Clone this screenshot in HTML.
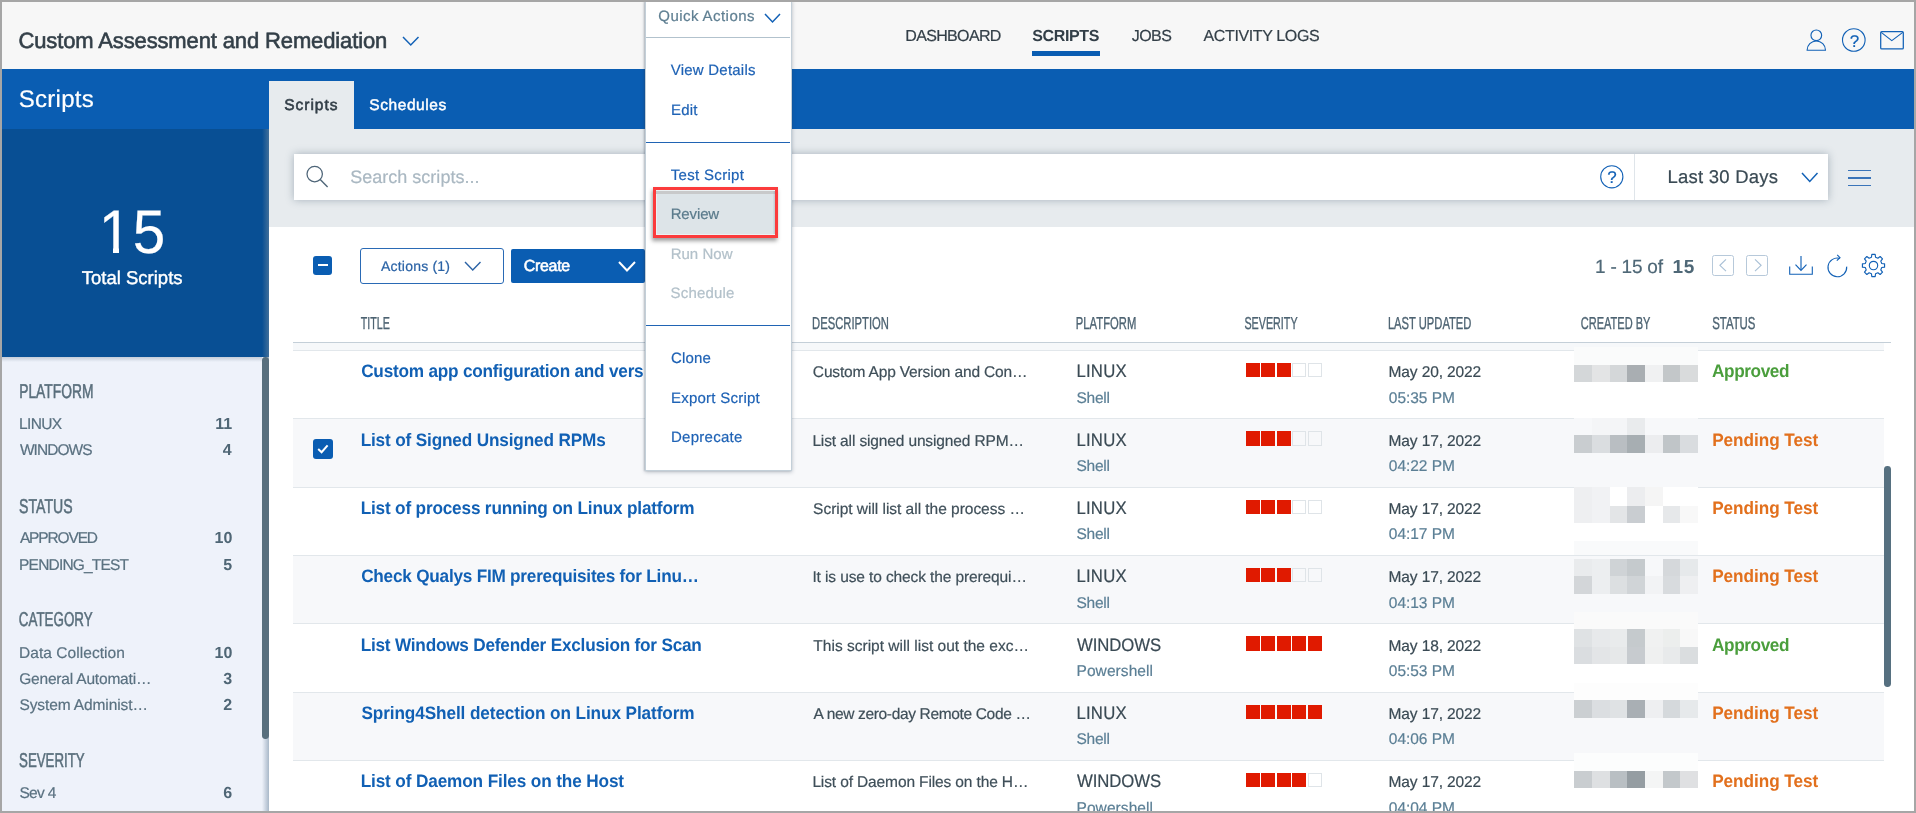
<!DOCTYPE html>
<html lang="en">
<head>
<meta charset="utf-8">
<title>Custom Assessment and Remediation - Scripts</title>
<style>
html,body{margin:0;padding:0;}
body{width:1916px;height:813px;overflow:hidden;background:#fff;font-family:"Liberation Sans",sans-serif;}
#root{position:absolute;left:0;top:0;width:1916px;height:813px;overflow:hidden;background:transparent;will-change:transform;}
#root div,#root .t,#root svg,#root .g{position:absolute;}
#root div{box-sizing:border-box;}
.g{left:0;top:0;width:0;height:0;margin:0;padding:0;border:0;list-style:none;display:block;}
.t{white-space:nowrap;display:block;margin:0;padding:0;font-weight:400;font-style:normal;text-decoration:none;text-rendering:geometricPrecision;}
svg{overflow:visible;}
</style>
</head>
<body>
<div id="root">
<!-- application header -->
<header class="g app-header">
<div style="left:0px;top:0px;width:1916px;height:69px;background:#f7f7f7;"></div>
<h1 class="t" id="t0" style="top:28px;font-size:22px;line-height:25px;color:#333f48;-webkit-text-stroke:0.6px #333f48;left:18.47px;letter-spacing:-0.131px;">Custom Assessment and Remediation</h1>
<svg style="left:402.5px;top:36.5px;" width="15.5" height="8" viewBox="0 0 15.5 8" fill="none"><polyline points="0,0 7.75,8 15.5,0" stroke="#1261b6" stroke-width="1.5" stroke-linecap="butt" stroke-linejoin="miter"/></svg>
<nav class="g app-nav">
<a class="t" id="t1" style="top:28px;font-size:16px;line-height:17px;color:#333f48;-webkit-text-stroke:0.2px #333f48;left:905.25px;letter-spacing:-0.657px;">DASHBOARD</a>
<a class="t" id="t2" aria-current="page" style="top:28px;font-size:16px;line-height:17px;color:#333f48;font-weight:700;left:1032.25px;letter-spacing:-0.362px;">SCRIPTS</a>
<div style="left:1032px;top:51px;width:68px;height:5px;background:#0a5db2;"></div>
<a class="t" id="t3" style="top:28px;font-size:16px;line-height:17px;color:#333f48;-webkit-text-stroke:0.2px #333f48;left:1131.75px;letter-spacing:-0.558px;">JOBS</a>
<a class="t" id="t4" style="top:28px;font-size:16px;line-height:17px;color:#333f48;-webkit-text-stroke:0.2px #333f48;left:1203.50px;letter-spacing:-0.371px;">ACTIVITY LOGS</a>
</nav>
<svg style="left:1806px;top:29px;" width="21" height="23" viewBox="0 0 21 23" fill="none"><circle cx="10.3" cy="6.3" r="5.35" stroke="#1261b6" stroke-width="1.15"/><path d="M1.1 21.2 A9.2 9.2 0 0 1 19.5 21.2 Z" stroke="#1261b6" stroke-width="1.15" stroke-linejoin="round"/></svg>
<svg style="left:1842px;top:28.3px;" width="24" height="24" viewBox="0 0 24 24" fill="none"><circle cx="11.8" cy="12" r="11.3" stroke="#1261b6" stroke-width="1.1"/></svg>
<span class="t" id="t5" style="top:32px;font-size:17px;line-height:19px;color:#1261b6;-webkit-text-stroke:0.2px #1261b6;left:1849.70px;">?</span>
<svg style="left:1880px;top:31px;" width="24" height="19" viewBox="0 0 24 19" fill="none"><rect x="0.7" y="0.7" width="22.6" height="17.2" rx="1" stroke="#1261b6" stroke-width="1.25"/><polyline points="1.2,1.4 11.8,9.6 22.8,1.4" stroke="#1261b6" stroke-width="1.15" stroke-linejoin="round"/></svg>
</header>
<!-- module bar -->
<section class="g module-bar">
<div style="left:0px;top:69px;width:1916px;height:60px;background:#0a5db2;"></div>
<h2 class="t" id="t6" style="top:86px;font-size:24px;line-height:27px;color:#fff;-webkit-text-stroke:0.2px #fff;left:18.75px;letter-spacing:0.273px;">Scripts</h2>
<div style="left:269px;top:81px;width:85px;height:48px;background:#e7ebee;"></div>
<span class="t" id="t7" style="top:97px;font-size:15.5px;line-height:17px;color:#333f48;-webkit-text-stroke:0.6px #333f48;left:284.32px;letter-spacing:0.966px;">Scripts</span>
<span class="t" id="t8" style="top:97px;font-size:15.5px;line-height:17px;color:#fff;-webkit-text-stroke:0.45px #fff;left:369.32px;letter-spacing:0.572px;">Schedules</span>
</section>
<!-- sidebar -->
<aside class="g sidebar">
<div style="left:0px;top:129px;width:269px;height:228px;background:#084f94;"></div>
<span class="t" id="t9" style="top:198px;font-size:61.5px;line-height:69px;color:#fff;-webkit-text-stroke:0.2px #fff;left:98px;letter-spacing:1.599px;transform:translateX(0.75px) scale(0.9500,1.0000);transform-origin:left 56px;">15</span>
<div style="left:101px;top:247px;width:12px;height:7px;background:#084f94;"></div>
<div style="left:119px;top:247px;width:12px;height:7px;background:#084f94;"></div>
<span class="t" id="t10" style="top:267px;font-size:18.5px;line-height:21px;color:#fff;-webkit-text-stroke:0.4px #fff;left:81.71px;letter-spacing:0.008px;">Total Scripts</span>
<div style="left:0px;top:357px;width:269px;height:456px;background:#eef2fa;"></div>
<h3 class="t" id="t11" style="top:381px;font-size:20px;line-height:22px;color:#596e7b;-webkit-text-stroke:0.55px #596e7b;left:19px;transform:translateX(0.22px) scaleX(0.6908);transform-origin:left center;">PLATFORM</h3>
<span class="t" id="t12" style="top:416px;font-size:15.5px;line-height:17px;color:#5a7180;-webkit-text-stroke:0.2px #5a7180;left:19.09px;letter-spacing:-0.645px;">LINUX</span>
<span class="t" id="t13" style="top:416px;font-size:16px;line-height:17px;color:#4f6675;font-weight:700;left:215.18px;">11</span>
<span class="t" id="t14" style="top:442px;font-size:15.5px;line-height:17px;color:#5a7180;-webkit-text-stroke:0.2px #5a7180;left:19.90px;letter-spacing:-0.935px;">WINDOWS</span>
<span class="t" id="t15" style="top:442px;font-size:16px;line-height:17px;color:#4f6675;font-weight:700;left:222.69px;">4</span>
<h3 class="t" id="t16" style="top:496px;font-size:20px;line-height:22px;color:#596e7b;-webkit-text-stroke:0.55px #596e7b;left:19px;transform:translateX(0.06px) scaleX(0.7050);transform-origin:left center;">STATUS</h3>
<span class="t" id="t17" style="top:530px;font-size:15.5px;line-height:17px;color:#5a7180;-webkit-text-stroke:0.2px #5a7180;left:19.90px;letter-spacing:-1.143px;">APPROVED</span>
<span class="t" id="t18" style="top:530px;font-size:16px;line-height:17px;color:#4f6675;font-weight:700;left:214.55px;">10</span>
<span class="t" id="t19" style="top:557px;font-size:15.5px;line-height:17px;color:#5a7180;-webkit-text-stroke:0.2px #5a7180;left:19.09px;letter-spacing:-0.808px;">PENDING_TEST</span>
<span class="t" id="t20" style="top:557px;font-size:16px;line-height:17px;color:#4f6675;font-weight:700;left:223.19px;">5</span>
<h3 class="t" id="t21" style="top:609px;font-size:20px;line-height:22px;color:#596e7b;-webkit-text-stroke:0.55px #596e7b;left:18px;transform:translateX(0.87px) scaleX(0.6683);transform-origin:left center;">CATEGORY</h3>
<span class="t" id="t22" style="top:645px;font-size:15.5px;line-height:17px;color:#5a7180;-webkit-text-stroke:0.2px #5a7180;left:19.09px;letter-spacing:0.048px;">Data Collection</span>
<span class="t" id="t23" style="top:645px;font-size:16px;line-height:17px;color:#4f6675;font-weight:700;left:214.55px;">10</span>
<span class="t" id="t24" style="top:671px;font-size:15.5px;line-height:17px;color:#5a7180;-webkit-text-stroke:0.2px #5a7180;left:19.17px;letter-spacing:-0.188px;">General Automati…</span>
<span class="t" id="t25" style="top:671px;font-size:16px;line-height:17px;color:#4f6675;font-weight:700;left:223.19px;">3</span>
<span class="t" id="t26" style="top:697px;font-size:15.5px;line-height:17px;color:#5a7180;-webkit-text-stroke:0.2px #5a7180;left:19.42px;letter-spacing:-0.103px;">System Administ…</span>
<span class="t" id="t27" style="top:697px;font-size:16px;line-height:17px;color:#4f6675;font-weight:700;left:223.19px;">2</span>
<h3 class="t" id="t28" style="top:750px;font-size:20px;line-height:22px;color:#596e7b;-webkit-text-stroke:0.55px #596e7b;left:19px;transform:translateX(0.09px) scaleX(0.6627);transform-origin:left center;">SEVERITY</h3>
<span class="t" id="t29" style="top:785px;font-size:15.5px;line-height:17px;color:#5a7180;-webkit-text-stroke:0.2px #5a7180;left:19.42px;letter-spacing:-0.668px;">Sev 4</span>
<span class="t" id="t30" style="top:785px;font-size:16px;line-height:17px;color:#4f6675;font-weight:700;left:223.19px;">6</span>
<div style="left:0px;top:357px;width:262px;height:5px;background:linear-gradient(to bottom, rgba(90,110,135,.28), rgba(90,110,135,0));"></div>
<div style="left:261.5px;top:129px;width:7.5px;height:684px;background:linear-gradient(to right, rgba(112,137,160,0), rgba(112,137,160,.55));"></div>
<div style="left:262.2px;top:357.3px;width:6.8px;height:381.5px;background:#586f7d;border-radius:3.4px;"></div>
</aside>
<!-- main panel -->
<main class="g list-panel">
<div style="left:269px;top:129px;width:1647px;height:98px;background:#e7ebee;"></div>
<div style="left:269px;top:227px;width:1647px;height:586px;background:#fff;"></div>
<div style="left:294px;top:153.8px;width:1534px;height:46px;background:#fff;box-shadow:0 0 8px rgba(60,85,105,.38);"></div>
<div style="left:1634px;top:153.8px;width:1px;height:46px;background:#dfe5ea;"></div>
<svg style="left:306px;top:165px;" width="24" height="24" viewBox="0 0 24 24" fill="none"><circle cx="8.7" cy="9.1" r="7.7" stroke="#4e6578" stroke-width="1.25"/><line x1="14.2" y1="14.6" x2="21.6" y2="22" stroke="#4e6578" stroke-width="1.4"/></svg>
<span class="t" id="t31" style="top:167px;font-size:18px;line-height:20px;color:#aab8c2;-webkit-text-stroke:0.2px #aab8c2;left:350.14px;letter-spacing:0.021px;">Search scripts...</span>
<svg style="left:1600px;top:164.5px;" width="24" height="24" viewBox="0 0 24 24" fill="none"><circle cx="11.8" cy="11.8" r="11.1" stroke="#1261b6" stroke-width="1.1"/></svg>
<span class="t" id="t32" style="top:168px;font-size:17px;line-height:19px;color:#1261b6;-webkit-text-stroke:0.2px #1261b6;left:1607.30px;">?</span>
<span class="t" id="t33" style="top:166px;font-size:18.5px;line-height:21px;color:#3a4a54;-webkit-text-stroke:0.2px #3a4a54;left:1667.55px;letter-spacing:0.231px;">Last 30 Days</span>
<svg style="left:1802px;top:172.5px;" width="15.5" height="8.5" viewBox="0 0 15.5 8.5" fill="none"><polyline points="0,0 7.75,8.5 15.5,0" stroke="#1261b6" stroke-width="1.5" stroke-linecap="butt" stroke-linejoin="miter"/></svg>
<div style="left:1847.5px;top:170px;width:23.5px;height:1.4px;background:#3a74b9;"></div>
<div style="left:1847.5px;top:177.4px;width:23.5px;height:1.4px;background:#3a74b9;"></div>
<div style="left:1847.5px;top:184.8px;width:23.5px;height:1.4px;background:#3a74b9;"></div>
<section class="g toolbar">
<div style="left:313.2px;top:256px;width:19.2px;height:19.3px;background:#0a5db2;border-radius:3px;"></div>
<div style="left:317.6px;top:264.1px;width:10.4px;height:2.3px;background:#fff;"></div>
<div style="left:360px;top:248px;width:143.5px;height:35.5px;background:#fff;border:1px solid #2a6ab5;border-radius:3px;"></div>
<span class="t" id="t34" style="top:258px;font-size:14px;line-height:16px;color:#2b63a6;-webkit-text-stroke:0.2px #2b63a6;left:381.00px;letter-spacing:0.210px;">Actions (1)</span>
<svg style="left:464.5px;top:261.5px;" width="15.5" height="8" viewBox="0 0 15.5 8" fill="none"><polyline points="0,0 7.75,8 15.5,0" stroke="#2b63a6" stroke-width="1.4" stroke-linecap="butt" stroke-linejoin="miter"/></svg>
<div style="left:511px;top:249px;width:134px;height:34px;background:#0a5db2;border-radius:2px;"></div>
<span class="t" id="t35" style="top:258px;font-size:16px;line-height:17px;color:#fff;-webkit-text-stroke:0.55px #fff;left:523.65px;letter-spacing:-0.287px;">Create</span>
<svg style="left:619px;top:262px;" width="16" height="8.5" viewBox="0 0 16 8.5" fill="none"><polyline points="0,0 8,8.5 16,0" stroke="#fff" stroke-width="2" stroke-linecap="butt" stroke-linejoin="miter"/></svg>
<span class="t" id="t36" style="top:257px;font-size:19px;line-height:21px;color:#4f6877;-webkit-text-stroke:0.2px #4f6877;left:1595.01px;letter-spacing:-0.225px;">1 - 15 of</span>
<span class="t" id="t37" style="top:257px;font-size:19px;line-height:21px;color:#4f6877;font-weight:700;left:1672.61px;letter-spacing:0.520px;">15</span>
<div style="left:1712.2px;top:254.7px;width:21.6px;height:21.3px;background:transparent;border:1px solid #b7c9da;border-radius:2.5px;"></div>
<svg style="left:1718.6px;top:258.9px;" width="8" height="12.6" viewBox="0 0 8 12.6" fill="none"><polyline points="7,0.4 0.9,6.3 7,12.2" stroke="#a9c0d6" stroke-width="1.15"/></svg>
<div style="left:1746.2px;top:254.7px;width:21.6px;height:21.3px;background:transparent;border:1px solid #b7c9da;border-radius:2.5px;"></div>
<svg style="left:1753.6px;top:258.9px;" width="8" height="12.6" viewBox="0 0 8 12.6" fill="none"><polyline points="1,0.4 7.1,6.3 1,12.2" stroke="#a9c0d6" stroke-width="1.15"/></svg>
<svg style="left:1789px;top:256px;" width="24" height="20" viewBox="0 0 24 20" fill="none"><path d="M0.7 10.6 V18.3 H23.3 V10.6" stroke="#1261b6" stroke-width="1.1"/><line x1="12" y1="0" x2="12" y2="14" stroke="#1261b6" stroke-width="1.15"/><polyline points="6.5,8.6 12,14.3 17.5,8.6" stroke="#1261b6" stroke-width="1.15"/></svg>
<svg style="left:1827px;top:254px;" width="21" height="24" viewBox="0 0 21 24" fill="none"><path d="M19.65 12.6 A9.35 9.35 0 1 1 12.7 4.35" stroke="#1261b6" stroke-width="1.15"/><polyline points="10.2,0.8 13.0,3.7 9.8,6.6" stroke="#1261b6" stroke-width="1.15"/></svg>
<svg style="left:1861.3px;top:252.9px;" width="25" height="25" viewBox="0 0 25 25" fill="none"><path d="M10.83 1.42 L14.17 1.42 L14.55 4.25 L16.88 5.22 L19.15 3.49 L21.51 5.85 L19.78 8.12 L20.75 10.45 L23.58 10.83 L23.58 14.17 L20.75 14.55 L19.78 16.88 L21.51 19.15 L19.15 21.51 L16.88 19.78 L14.55 20.75 L14.17 23.58 L10.83 23.58 L10.45 20.75 L8.12 19.78 L5.85 21.51 L3.49 19.15 L5.22 16.88 L4.25 14.55 L1.42 14.17 L1.42 10.83 L4.25 10.45 L5.22 8.12 L3.49 5.85 L5.85 3.49 L8.12 5.22 L10.45 4.25 Z" stroke="#1261b6" stroke-width="1.15" stroke-linejoin="round"/><circle cx="12.5" cy="12.5" r="4.2" stroke="#1261b6" stroke-width="1.15"/></svg>
</section>
<section class="g grid" role="table">
<div class="g grid-head" role="row">
<span class="t" id="t38" role="columnheader" style="top:313px;font-size:17.3px;line-height:20px;color:#4d6372;-webkit-text-stroke:0.35px #4d6372;left:360px;transform:translateX(0.83px) scaleX(0.6187);transform-origin:left center;">TITLE</span>
<span class="t" id="t39" role="columnheader" style="top:313px;font-size:17.3px;line-height:20px;color:#4d6372;-webkit-text-stroke:0.35px #4d6372;left:812px;transform:translateX(0.12px) scaleX(0.6502);transform-origin:left center;">DESCRIPTION</span>
<span class="t" id="t40" role="columnheader" style="top:313px;font-size:17.3px;line-height:20px;color:#4d6372;-webkit-text-stroke:0.35px #4d6372;left:1075px;transform:translateX(0.87px) scaleX(0.6506);transform-origin:left center;">PLATFORM</span>
<span class="t" id="t41" role="columnheader" style="top:313px;font-size:17.3px;line-height:20px;color:#4d6372;-webkit-text-stroke:0.35px #4d6372;left:1244px;transform:translateX(0.41px) scaleX(0.6224);transform-origin:left center;">SEVERITY</span>
<span class="t" id="t42" role="columnheader" style="top:313px;font-size:17.3px;line-height:20px;color:#4d6372;-webkit-text-stroke:0.35px #4d6372;left:1387px;transform:translateX(0.88px) scaleX(0.6473);transform-origin:left center;">LAST UPDATED</span>
<span class="t" id="t43" role="columnheader" style="top:313px;font-size:17.3px;line-height:20px;color:#4d6372;-webkit-text-stroke:0.35px #4d6372;left:1580px;transform:translateX(0.78px) scaleX(0.6379);transform-origin:left center;">CREATED BY</span>
<span class="t" id="t44" role="columnheader" style="top:313px;font-size:17.3px;line-height:20px;color:#4d6372;-webkit-text-stroke:0.35px #4d6372;left:1712px;transform:translateX(0.14px) scaleX(0.6605);transform-origin:left center;">STATUS</span>
<div style="left:293px;top:342px;width:1598px;height:1.2px;background:#c4cfd8;"></div>
<div style="left:293px;top:343.2px;width:1591px;height:7px;background:#f6f8fa;"></div>
</div>
<!-- script rows -->
<div class="g grid-row" role="row">
<div style="left:293px;top:350px;width:1591px;height:1px;background:#e2e7eb;"></div>
<a class="t" id="t45" style="top:361px;font-size:18px;line-height:20px;color:#1160b4;font-weight:700;left:361px;letter-spacing:-0.225px;transform:translateX(0.16px) scale(0.9550,1.0000);transform-origin:left 16px;">Custom app configuration and vers</a>
<span class="t" id="t46" style="top:364px;font-size:15.5px;line-height:17px;color:#3f4f59;-webkit-text-stroke:0.2px #3f4f59;left:812.87px;letter-spacing:-0.165px;">Custom App Version and Con…</span>
<span class="t" id="t47" style="top:361px;font-size:18px;line-height:20px;color:#3a4a54;-webkit-text-stroke:0.2px #3a4a54;left:1076px;letter-spacing:0.264px;transform:translateX(0.39px) scale(0.9300,1.0000);transform-origin:left 16px;">LINUX</span>
<span class="t" id="t48" style="top:390px;font-size:15.5px;line-height:17px;color:#5b7f95;-webkit-text-stroke:0.2px #5b7f95;left:1076.52px;letter-spacing:-0.241px;">Shell</span>
<div style="left:1246px;top:363px;width:14px;height:14px;background:#e01a00;"></div>
<div style="left:1261.45px;top:363px;width:14px;height:14px;background:#e01a00;"></div>
<div style="left:1276.9px;top:363px;width:14px;height:14px;background:#e01a00;"></div>
<div style="left:1292.35px;top:363px;width:14px;height:14px;background:transparent;border:1px solid #dfe4e8;"></div>
<div style="left:1307.8px;top:363px;width:14px;height:14px;background:transparent;border:1px solid #dfe4e8;"></div>
<span class="t" id="t49" style="top:364px;font-size:15.5px;line-height:17px;color:#3a4a54;-webkit-text-stroke:0.2px #3a4a54;left:1388.59px;letter-spacing:-0.127px;">May 20, 2022</span>
<span class="t" id="t50" style="top:390px;font-size:15.5px;line-height:17px;color:#5b7f95;-webkit-text-stroke:0.2px #5b7f95;left:1388.82px;letter-spacing:-0.033px;">05:35 PM</span>
<div style="left:1574px;top:347px;width:18.0143px;height:18px;background:#fafbfb;"></div>
<div style="left:1591.75px;top:347px;width:18.0143px;height:18px;background:#fafbfb;"></div>
<div style="left:1609.5px;top:347px;width:18.0143px;height:18px;background:#fafbfb;"></div>
<div style="left:1627.25px;top:347px;width:18.0143px;height:18px;background:#fafbfb;"></div>
<div style="left:1644.75px;top:347px;width:18.0143px;height:18px;background:#fafbfb;"></div>
<div style="left:1662.5px;top:347px;width:18.0143px;height:18px;background:#fafbfb;"></div>
<div style="left:1680.25px;top:347px;width:18.0143px;height:18px;background:#fafbfb;"></div>
<div style="left:1574px;top:365px;width:18.0143px;height:17px;background:#d4d7d9;"></div>
<div style="left:1591.75px;top:365px;width:18.0143px;height:17px;background:#e3e4e5;"></div>
<div style="left:1609.5px;top:365px;width:18.0143px;height:17px;background:#d4d7d9;"></div>
<div style="left:1627.25px;top:365px;width:18.0143px;height:17px;background:#a9aeb2;"></div>
<div style="left:1644.75px;top:365px;width:18.0143px;height:17px;background:#f0f1f2;"></div>
<div style="left:1662.5px;top:365px;width:18.0143px;height:17px;background:#c3c7c9;"></div>
<div style="left:1680.25px;top:365px;width:18.0143px;height:17px;background:#d9dbdc;"></div>
<span class="t" id="t51" style="top:361px;font-size:18px;line-height:20px;color:#4a9e3c;font-weight:700;left:1712px;letter-spacing:-0.414px;transform:translateX(0.03px) scale(0.9550,1.0000);transform-origin:left 16px;">Approved</span>
</div>
<div class="g grid-row" role="row">
<div style="left:293px;top:418.3px;width:1591px;height:68.4px;background:#f7f8fa;"></div>
<div style="left:293px;top:418.3px;width:1591px;height:1px;background:#e2e7eb;"></div>
<div style="left:313px;top:439.3px;width:19.5px;height:19.5px;background:#0a5db2;border-radius:3px;"></div>
<svg style="left:317px;top:443.8px;" width="12" height="10" viewBox="0 0 12 10" fill="none"><polyline points="1.2,5 4.6,8.2 10.6,1.4" stroke="#fff" stroke-width="2"/></svg>
<a class="t" id="t52" style="top:430px;font-size:18px;line-height:20px;color:#1160b4;font-weight:700;left:360px;letter-spacing:-0.163px;transform:translateX(0.63px) scale(0.9550,1.0000);transform-origin:left 16px;">List of Signed Unsigned RPMs</a>
<span class="t" id="t53" style="top:433px;font-size:15.5px;line-height:17px;color:#3f4f59;-webkit-text-stroke:0.2px #3f4f59;left:812.39px;letter-spacing:-0.137px;">List all signed unsigned RPM…</span>
<span class="t" id="t54" style="top:430px;font-size:18px;line-height:20px;color:#3a4a54;-webkit-text-stroke:0.2px #3a4a54;left:1076px;letter-spacing:0.264px;transform:translateX(0.39px) scale(0.9300,1.0000);transform-origin:left 16px;">LINUX</span>
<span class="t" id="t55" style="top:458px;font-size:15.5px;line-height:17px;color:#5b7f95;-webkit-text-stroke:0.2px #5b7f95;left:1076.52px;letter-spacing:-0.241px;">Shell</span>
<div style="left:1246px;top:431px;width:14px;height:15px;background:#e01a00;"></div>
<div style="left:1261.45px;top:431px;width:14px;height:15px;background:#e01a00;"></div>
<div style="left:1276.9px;top:431px;width:14px;height:15px;background:#e01a00;"></div>
<div style="left:1292.35px;top:431px;width:14px;height:15px;background:transparent;border:1px solid #dfe4e8;"></div>
<div style="left:1307.8px;top:431px;width:14px;height:15px;background:transparent;border:1px solid #dfe4e8;"></div>
<span class="t" id="t56" style="top:433px;font-size:15.5px;line-height:17px;color:#3a4a54;-webkit-text-stroke:0.2px #3a4a54;left:1388.59px;letter-spacing:-0.127px;">May 17, 2022</span>
<span class="t" id="t57" style="top:458px;font-size:15.5px;line-height:17px;color:#5b7f95;-webkit-text-stroke:0.2px #5b7f95;left:1388.82px;letter-spacing:-0.033px;">04:22 PM</span>
<div style="left:1574px;top:418.3px;width:18.0143px;height:17px;background:#f7f8fa;"></div>
<div style="left:1591.75px;top:418.3px;width:18.0143px;height:17px;background:#f4f5f7;"></div>
<div style="left:1609.5px;top:418.3px;width:18.0143px;height:17px;background:#f4f5f7;"></div>
<div style="left:1627.25px;top:418.3px;width:18.0143px;height:17px;background:#e9ebed;"></div>
<div style="left:1644.75px;top:418.3px;width:18.0143px;height:17px;background:#f7f8fa;"></div>
<div style="left:1662.5px;top:418.3px;width:18.0143px;height:17px;background:#f7f8fa;"></div>
<div style="left:1680.25px;top:418.3px;width:18.0143px;height:17px;background:#f7f8fa;"></div>
<div style="left:1574px;top:435.3px;width:18.0143px;height:18px;background:#c9cdd0;"></div>
<div style="left:1591.75px;top:435.3px;width:18.0143px;height:18px;background:#dadde0;"></div>
<div style="left:1609.5px;top:435.3px;width:18.0143px;height:18px;background:#b9bec2;"></div>
<div style="left:1627.25px;top:435.3px;width:18.0143px;height:18px;background:#a7aeb2;"></div>
<div style="left:1644.75px;top:435.3px;width:18.0143px;height:18px;background:#ecedef;"></div>
<div style="left:1662.5px;top:435.3px;width:18.0143px;height:18px;background:#c0c5c8;"></div>
<div style="left:1680.25px;top:435.3px;width:18.0143px;height:18px;background:#d9dcdf;"></div>
<span class="t" id="t58" style="top:430px;font-size:18px;line-height:20px;color:#e2701d;font-weight:700;left:1712px;letter-spacing:-0.048px;transform:translateX(0.13px) scale(0.9550,1.0000);transform-origin:left 16px;">Pending Test</span>
</div>
<div class="g grid-row" role="row">
<div style="left:293px;top:486.7px;width:1591px;height:1px;background:#e2e7eb;"></div>
<a class="t" id="t59" style="top:498px;font-size:18px;line-height:20px;color:#1160b4;font-weight:700;left:360px;letter-spacing:-0.184px;transform:translateX(0.63px) scale(0.9550,1.0000);transform-origin:left 16px;">List of process running on Linux platform</a>
<span class="t" id="t60" style="top:501px;font-size:15.5px;line-height:17px;color:#3f4f59;-webkit-text-stroke:0.2px #3f4f59;left:813.12px;letter-spacing:-0.029px;">Script will list all the process …</span>
<span class="t" id="t61" style="top:498px;font-size:18px;line-height:20px;color:#3a4a54;-webkit-text-stroke:0.2px #3a4a54;left:1076px;letter-spacing:0.264px;transform:translateX(0.39px) scale(0.9300,1.0000);transform-origin:left 16px;">LINUX</span>
<span class="t" id="t62" style="top:526px;font-size:15.5px;line-height:17px;color:#5b7f95;-webkit-text-stroke:0.2px #5b7f95;left:1076.52px;letter-spacing:-0.241px;">Shell</span>
<div style="left:1246px;top:500px;width:14px;height:14px;background:#e01a00;"></div>
<div style="left:1261.45px;top:500px;width:14px;height:14px;background:#e01a00;"></div>
<div style="left:1276.9px;top:500px;width:14px;height:14px;background:#e01a00;"></div>
<div style="left:1292.35px;top:500px;width:14px;height:14px;background:transparent;border:1px solid #dfe4e8;"></div>
<div style="left:1307.8px;top:500px;width:14px;height:14px;background:transparent;border:1px solid #dfe4e8;"></div>
<span class="t" id="t63" style="top:501px;font-size:15.5px;line-height:17px;color:#3a4a54;-webkit-text-stroke:0.2px #3a4a54;left:1388.59px;letter-spacing:-0.127px;">May 17, 2022</span>
<span class="t" id="t64" style="top:526px;font-size:15.5px;line-height:17px;color:#5b7f95;-webkit-text-stroke:0.2px #5b7f95;left:1388.82px;letter-spacing:-0.033px;">04:17 PM</span>
<div style="left:1574px;top:486.7px;width:18.0143px;height:19px;background:#eeeff1;"></div>
<div style="left:1591.75px;top:486.7px;width:18.0143px;height:19px;background:#f1f2f4;"></div>
<div style="left:1609.5px;top:486.7px;width:18.0143px;height:19px;background:#ffffff;"></div>
<div style="left:1627.25px;top:486.7px;width:18.0143px;height:19px;background:#ecedef;"></div>
<div style="left:1644.75px;top:486.7px;width:18.0143px;height:19px;background:#f5f5f5;"></div>
<div style="left:1662.5px;top:486.7px;width:18.0143px;height:19px;background:#ffffff;"></div>
<div style="left:1680.25px;top:486.7px;width:18.0143px;height:19px;background:#ffffff;"></div>
<div style="left:1574px;top:505.7px;width:18.0143px;height:17.5px;background:#eeeff1;"></div>
<div style="left:1591.75px;top:505.7px;width:18.0143px;height:17.5px;background:#f1f2f4;"></div>
<div style="left:1609.5px;top:505.7px;width:18.0143px;height:17.5px;background:#e3e5e7;"></div>
<div style="left:1627.25px;top:505.7px;width:18.0143px;height:17.5px;background:#c9cdd1;"></div>
<div style="left:1644.75px;top:505.7px;width:18.0143px;height:17.5px;background:#ffffff;"></div>
<div style="left:1662.5px;top:505.7px;width:18.0143px;height:17.5px;background:#e6e8ea;"></div>
<div style="left:1680.25px;top:505.7px;width:18.0143px;height:17.5px;background:#f8f8f8;"></div>
<div style="left:1574px;top:540.7px;width:18.0143px;height:14px;background:#f9fafb;"></div>
<div style="left:1591.75px;top:540.7px;width:18.0143px;height:14px;background:#f9fafb;"></div>
<div style="left:1609.5px;top:540.7px;width:18.0143px;height:14px;background:#f9fafb;"></div>
<div style="left:1627.25px;top:540.7px;width:18.0143px;height:14px;background:#f9fafb;"></div>
<div style="left:1644.75px;top:540.7px;width:18.0143px;height:14px;background:#f9fafb;"></div>
<div style="left:1662.5px;top:540.7px;width:18.0143px;height:14px;background:#f9fafb;"></div>
<div style="left:1680.25px;top:540.7px;width:18.0143px;height:14px;background:#f9fafb;"></div>
<span class="t" id="t65" style="top:498px;font-size:18px;line-height:20px;color:#e2701d;font-weight:700;left:1712px;letter-spacing:-0.048px;transform:translateX(0.13px) scale(0.9550,1.0000);transform-origin:left 16px;">Pending Test</span>
</div>
<div class="g grid-row" role="row">
<div style="left:293px;top:555px;width:1591px;height:68.3px;background:#f7f8fa;"></div>
<div style="left:293px;top:555px;width:1591px;height:1px;background:#e2e7eb;"></div>
<a class="t" id="t66" style="top:566px;font-size:18px;line-height:20px;color:#1160b4;font-weight:700;left:361px;letter-spacing:-0.242px;transform:translateX(0.16px) scale(0.9550,1.0000);transform-origin:left 16px;">Check Qualys FIM prerequisites for Linu…</a>
<span class="t" id="t67" style="top:569px;font-size:15.5px;line-height:17px;color:#3f4f59;-webkit-text-stroke:0.2px #3f4f59;left:812.39px;letter-spacing:-0.110px;">It is use to check the prerequi…</span>
<span class="t" id="t68" style="top:566px;font-size:18px;line-height:20px;color:#3a4a54;-webkit-text-stroke:0.2px #3a4a54;left:1076px;letter-spacing:0.264px;transform:translateX(0.39px) scale(0.9300,1.0000);transform-origin:left 16px;">LINUX</span>
<span class="t" id="t69" style="top:595px;font-size:15.5px;line-height:17px;color:#5b7f95;-webkit-text-stroke:0.2px #5b7f95;left:1076.52px;letter-spacing:-0.241px;">Shell</span>
<div style="left:1246px;top:568px;width:14px;height:14px;background:#e01a00;"></div>
<div style="left:1261.45px;top:568px;width:14px;height:14px;background:#e01a00;"></div>
<div style="left:1276.9px;top:568px;width:14px;height:14px;background:#e01a00;"></div>
<div style="left:1292.35px;top:568px;width:14px;height:14px;background:transparent;border:1px solid #dfe4e8;"></div>
<div style="left:1307.8px;top:568px;width:14px;height:14px;background:transparent;border:1px solid #dfe4e8;"></div>
<span class="t" id="t70" style="top:569px;font-size:15.5px;line-height:17px;color:#3a4a54;-webkit-text-stroke:0.2px #3a4a54;left:1388.59px;letter-spacing:-0.127px;">May 17, 2022</span>
<span class="t" id="t71" style="top:595px;font-size:15.5px;line-height:17px;color:#5b7f95;-webkit-text-stroke:0.2px #5b7f95;left:1388.82px;letter-spacing:-0.033px;">04:13 PM</span>
<div style="left:1574px;top:559px;width:18.0143px;height:17px;background:#e9ebed;"></div>
<div style="left:1591.75px;top:559px;width:18.0143px;height:17px;background:#eceef0;"></div>
<div style="left:1609.5px;top:559px;width:18.0143px;height:17px;background:#cfd3d6;"></div>
<div style="left:1627.25px;top:559px;width:18.0143px;height:17px;background:#c5cacd;"></div>
<div style="left:1644.75px;top:559px;width:18.0143px;height:17px;background:#f7f8fa;"></div>
<div style="left:1662.5px;top:559px;width:18.0143px;height:17px;background:#d5d8db;"></div>
<div style="left:1680.25px;top:559px;width:18.0143px;height:17px;background:#e6e9eb;"></div>
<div style="left:1574px;top:576px;width:18.0143px;height:17.5px;background:#d3d6d9;"></div>
<div style="left:1591.75px;top:576px;width:18.0143px;height:17.5px;background:#eceef0;"></div>
<div style="left:1609.5px;top:576px;width:18.0143px;height:17.5px;background:#dcdfe1;"></div>
<div style="left:1627.25px;top:576px;width:18.0143px;height:17.5px;background:#d0d4d7;"></div>
<div style="left:1644.75px;top:576px;width:18.0143px;height:17.5px;background:#f2f3f5;"></div>
<div style="left:1662.5px;top:576px;width:18.0143px;height:17.5px;background:#d8dbde;"></div>
<div style="left:1680.25px;top:576px;width:18.0143px;height:17.5px;background:#eeeff1;"></div>
<div style="left:1574px;top:612px;width:18.0143px;height:11.3px;background:#fafafa;"></div>
<div style="left:1591.75px;top:612px;width:18.0143px;height:11.3px;background:#fafafa;"></div>
<div style="left:1609.5px;top:612px;width:18.0143px;height:11.3px;background:#fafafa;"></div>
<div style="left:1627.25px;top:612px;width:18.0143px;height:11.3px;background:#fafafa;"></div>
<div style="left:1644.75px;top:612px;width:18.0143px;height:11.3px;background:#fafafa;"></div>
<div style="left:1662.5px;top:612px;width:18.0143px;height:11.3px;background:#fafafa;"></div>
<div style="left:1680.25px;top:612px;width:18.0143px;height:11.3px;background:#fafafa;"></div>
<span class="t" id="t72" style="top:566px;font-size:18px;line-height:20px;color:#e2701d;font-weight:700;left:1712px;letter-spacing:-0.048px;transform:translateX(0.13px) scale(0.9550,1.0000);transform-origin:left 16px;">Pending Test</span>
</div>
<div class="g grid-row" role="row">
<div style="left:293px;top:623.3px;width:1591px;height:1px;background:#e2e7eb;"></div>
<a class="t" id="t73" style="top:635px;font-size:18px;line-height:20px;color:#1160b4;font-weight:700;left:360px;letter-spacing:-0.221px;transform:translateX(0.63px) scale(0.9550,1.0000);transform-origin:left 16px;">List Windows Defender Exclusion for Scan</a>
<span class="t" id="t74" style="top:638px;font-size:15.5px;line-height:17px;color:#3f4f59;-webkit-text-stroke:0.2px #3f4f59;left:813.36px;letter-spacing:0.007px;">This script will list out the exc…</span>
<span class="t" id="t75" style="top:635px;font-size:18px;line-height:20px;color:#3a4a54;-webkit-text-stroke:0.2px #3a4a54;left:1077px;letter-spacing:-0.074px;transform:translateX(0.00px) scale(0.9300,1.0000);transform-origin:left 16px;">WINDOWS</span>
<span class="t" id="t76" style="top:663px;font-size:15.5px;line-height:17px;color:#5b7f95;-webkit-text-stroke:0.2px #5b7f95;left:1076.49px;letter-spacing:0.080px;">Powershell</span>
<div style="left:1246px;top:636px;width:14px;height:15px;background:#e01a00;"></div>
<div style="left:1261.45px;top:636px;width:14px;height:15px;background:#e01a00;"></div>
<div style="left:1276.9px;top:636px;width:14px;height:15px;background:#e01a00;"></div>
<div style="left:1292.35px;top:636px;width:14px;height:15px;background:#e01a00;"></div>
<div style="left:1307.8px;top:636px;width:14px;height:15px;background:#e01a00;"></div>
<span class="t" id="t77" style="top:638px;font-size:15.5px;line-height:17px;color:#3a4a54;-webkit-text-stroke:0.2px #3a4a54;left:1388.59px;letter-spacing:-0.127px;">May 18, 2022</span>
<span class="t" id="t78" style="top:663px;font-size:15.5px;line-height:17px;color:#5b7f95;-webkit-text-stroke:0.2px #5b7f95;left:1388.82px;letter-spacing:-0.033px;">05:53 PM</span>
<div style="left:1574px;top:623.3px;width:18.0143px;height:5.7px;background:#fafafa;"></div>
<div style="left:1591.75px;top:623.3px;width:18.0143px;height:5.7px;background:#fafafa;"></div>
<div style="left:1609.5px;top:623.3px;width:18.0143px;height:5.7px;background:#fafafa;"></div>
<div style="left:1627.25px;top:623.3px;width:18.0143px;height:5.7px;background:#fafafa;"></div>
<div style="left:1644.75px;top:623.3px;width:18.0143px;height:5.7px;background:#fafafa;"></div>
<div style="left:1662.5px;top:623.3px;width:18.0143px;height:5.7px;background:#fafafa;"></div>
<div style="left:1680.25px;top:623.3px;width:18.0143px;height:5.7px;background:#fafafa;"></div>
<div style="left:1574px;top:629px;width:18.0143px;height:18px;background:#dfe2e4;"></div>
<div style="left:1591.75px;top:629px;width:18.0143px;height:18px;background:#e7e9eb;"></div>
<div style="left:1609.5px;top:629px;width:18.0143px;height:18px;background:#e9ebec;"></div>
<div style="left:1627.25px;top:629px;width:18.0143px;height:18px;background:#c5cacd;"></div>
<div style="left:1644.75px;top:629px;width:18.0143px;height:18px;background:#f0f1f1;"></div>
<div style="left:1662.5px;top:629px;width:18.0143px;height:18px;background:#eceeed;"></div>
<div style="left:1680.25px;top:629px;width:18.0143px;height:18px;background:#f8f8f8;"></div>
<div style="left:1574px;top:647px;width:18.0143px;height:17.3px;background:#dadde0;"></div>
<div style="left:1591.75px;top:647px;width:18.0143px;height:17.3px;background:#e3e5e7;"></div>
<div style="left:1609.5px;top:647px;width:18.0143px;height:17.3px;background:#e6e8e9;"></div>
<div style="left:1627.25px;top:647px;width:18.0143px;height:17.3px;background:#c7cbcf;"></div>
<div style="left:1644.75px;top:647px;width:18.0143px;height:17.3px;background:#eff0f0;"></div>
<div style="left:1662.5px;top:647px;width:18.0143px;height:17.3px;background:#e8eaeb;"></div>
<div style="left:1680.25px;top:647px;width:18.0143px;height:17.3px;background:#dadddf;"></div>
<div style="left:1574px;top:682.8px;width:18.0143px;height:8.9px;background:#fdfdfd;"></div>
<div style="left:1591.75px;top:682.8px;width:18.0143px;height:8.9px;background:#fdfdfd;"></div>
<div style="left:1609.5px;top:682.8px;width:18.0143px;height:8.9px;background:#fdfdfd;"></div>
<div style="left:1627.25px;top:682.8px;width:18.0143px;height:8.9px;background:#fdfdfd;"></div>
<div style="left:1644.75px;top:682.8px;width:18.0143px;height:8.9px;background:#fdfdfd;"></div>
<div style="left:1662.5px;top:682.8px;width:18.0143px;height:8.9px;background:#fdfdfd;"></div>
<div style="left:1680.25px;top:682.8px;width:18.0143px;height:8.9px;background:#fdfdfd;"></div>
<span class="t" id="t79" style="top:635px;font-size:18px;line-height:20px;color:#4a9e3c;font-weight:700;left:1712px;letter-spacing:-0.414px;transform:translateX(0.03px) scale(0.9550,1.0000);transform-origin:left 16px;">Approved</span>
</div>
<div class="g grid-row" role="row">
<div style="left:293px;top:691.7px;width:1591px;height:68.3px;background:#f7f8fa;"></div>
<div style="left:293px;top:691.7px;width:1591px;height:1px;background:#e2e7eb;"></div>
<a class="t" id="t80" style="top:703px;font-size:18px;line-height:20px;color:#1160b4;font-weight:700;left:361px;letter-spacing:-0.108px;transform:translateX(0.43px) scale(0.9550,1.0000);transform-origin:left 16px;">Spring4Shell detection on Linux Platform</a>
<span class="t" id="t81" style="top:706px;font-size:15.5px;line-height:17px;color:#3f4f59;-webkit-text-stroke:0.2px #3f4f59;left:813.60px;letter-spacing:-0.343px;">A new zero-day Remote Code …</span>
<span class="t" id="t82" style="top:703px;font-size:18px;line-height:20px;color:#3a4a54;-webkit-text-stroke:0.2px #3a4a54;left:1076px;letter-spacing:0.264px;transform:translateX(0.39px) scale(0.9300,1.0000);transform-origin:left 16px;">LINUX</span>
<span class="t" id="t83" style="top:731px;font-size:15.5px;line-height:17px;color:#5b7f95;-webkit-text-stroke:0.2px #5b7f95;left:1076.52px;letter-spacing:-0.241px;">Shell</span>
<div style="left:1246px;top:705px;width:14px;height:14px;background:#e01a00;"></div>
<div style="left:1261.45px;top:705px;width:14px;height:14px;background:#e01a00;"></div>
<div style="left:1276.9px;top:705px;width:14px;height:14px;background:#e01a00;"></div>
<div style="left:1292.35px;top:705px;width:14px;height:14px;background:#e01a00;"></div>
<div style="left:1307.8px;top:705px;width:14px;height:14px;background:#e01a00;"></div>
<span class="t" id="t84" style="top:706px;font-size:15.5px;line-height:17px;color:#3a4a54;-webkit-text-stroke:0.2px #3a4a54;left:1388.59px;letter-spacing:-0.127px;">May 17, 2022</span>
<span class="t" id="t85" style="top:731px;font-size:15.5px;line-height:17px;color:#5b7f95;-webkit-text-stroke:0.2px #5b7f95;left:1388.82px;letter-spacing:-0.033px;">04:06 PM</span>
<div style="left:1574px;top:691.7px;width:18.0143px;height:8.3px;background:#fdfdfd;"></div>
<div style="left:1591.75px;top:691.7px;width:18.0143px;height:8.3px;background:#fdfdfd;"></div>
<div style="left:1609.5px;top:691.7px;width:18.0143px;height:8.3px;background:#fdfdfd;"></div>
<div style="left:1627.25px;top:691.7px;width:18.0143px;height:8.3px;background:#fdfdfd;"></div>
<div style="left:1644.75px;top:691.7px;width:18.0143px;height:8.3px;background:#fdfdfd;"></div>
<div style="left:1662.5px;top:691.7px;width:18.0143px;height:8.3px;background:#fdfdfd;"></div>
<div style="left:1680.25px;top:691.7px;width:18.0143px;height:8.3px;background:#fdfdfd;"></div>
<div style="left:1574px;top:700px;width:18.0143px;height:18px;background:#cbcfd2;"></div>
<div style="left:1591.75px;top:700px;width:18.0143px;height:18px;background:#dbdee1;"></div>
<div style="left:1609.5px;top:700px;width:18.0143px;height:18px;background:#dfe2e4;"></div>
<div style="left:1627.25px;top:700px;width:18.0143px;height:18px;background:#a9afb4;"></div>
<div style="left:1644.75px;top:700px;width:18.0143px;height:18px;background:#eeeff1;"></div>
<div style="left:1662.5px;top:700px;width:18.0143px;height:18px;background:#d5d9dc;"></div>
<div style="left:1680.25px;top:700px;width:18.0143px;height:18px;background:#e6e9eb;"></div>
<div style="left:1574px;top:753.2px;width:18.0143px;height:6.8px;background:#fcfdfd;"></div>
<div style="left:1591.75px;top:753.2px;width:18.0143px;height:6.8px;background:#fcfdfd;"></div>
<div style="left:1609.5px;top:753.2px;width:18.0143px;height:6.8px;background:#fcfdfd;"></div>
<div style="left:1627.25px;top:753.2px;width:18.0143px;height:6.8px;background:#fcfdfd;"></div>
<div style="left:1644.75px;top:753.2px;width:18.0143px;height:6.8px;background:#fcfdfd;"></div>
<div style="left:1662.5px;top:753.2px;width:18.0143px;height:6.8px;background:#fcfdfd;"></div>
<div style="left:1680.25px;top:753.2px;width:18.0143px;height:6.8px;background:#fcfdfd;"></div>
<span class="t" id="t86" style="top:703px;font-size:18px;line-height:20px;color:#e2701d;font-weight:700;left:1712px;letter-spacing:-0.048px;transform:translateX(0.13px) scale(0.9550,1.0000);transform-origin:left 16px;">Pending Test</span>
</div>
<div class="g grid-row" role="row">
<div style="left:293px;top:760px;width:1591px;height:1px;background:#e2e7eb;"></div>
<a class="t" id="t87" style="top:771px;font-size:18px;line-height:20px;color:#1160b4;font-weight:700;left:360px;letter-spacing:-0.134px;transform:translateX(0.63px) scale(0.9550,1.0000);transform-origin:left 16px;">List of Daemon Files on the Host</a>
<span class="t" id="t88" style="top:774px;font-size:15.5px;line-height:17px;color:#3f4f59;-webkit-text-stroke:0.2px #3f4f59;left:812.39px;letter-spacing:-0.125px;">List of Daemon Files on the H…</span>
<span class="t" id="t89" style="top:771px;font-size:18px;line-height:20px;color:#3a4a54;-webkit-text-stroke:0.2px #3a4a54;left:1077px;letter-spacing:-0.074px;transform:translateX(0.00px) scale(0.9300,1.0000);transform-origin:left 16px;">WINDOWS</span>
<span class="t" id="t90" style="top:800px;font-size:15.5px;line-height:17px;color:#5b7f95;-webkit-text-stroke:0.2px #5b7f95;left:1076.49px;letter-spacing:0.080px;">Powershell</span>
<div style="left:1246px;top:773px;width:14px;height:14px;background:#e01a00;"></div>
<div style="left:1261.45px;top:773px;width:14px;height:14px;background:#e01a00;"></div>
<div style="left:1276.9px;top:773px;width:14px;height:14px;background:#e01a00;"></div>
<div style="left:1292.35px;top:773px;width:14px;height:14px;background:#e01a00;"></div>
<div style="left:1307.8px;top:773px;width:14px;height:14px;background:transparent;border:1px solid #dfe4e8;"></div>
<span class="t" id="t91" style="top:774px;font-size:15.5px;line-height:17px;color:#3a4a54;-webkit-text-stroke:0.2px #3a4a54;left:1388.59px;letter-spacing:-0.127px;">May 17, 2022</span>
<span class="t" id="t92" style="top:800px;font-size:15.5px;line-height:17px;color:#5b7f95;-webkit-text-stroke:0.2px #5b7f95;left:1388.82px;letter-spacing:-0.033px;">04:04 PM</span>
<div style="left:1574px;top:760px;width:18.0143px;height:11px;background:#fcfdfd;"></div>
<div style="left:1591.75px;top:760px;width:18.0143px;height:11px;background:#fcfdfd;"></div>
<div style="left:1609.5px;top:760px;width:18.0143px;height:11px;background:#fcfdfd;"></div>
<div style="left:1627.25px;top:760px;width:18.0143px;height:11px;background:#fcfdfd;"></div>
<div style="left:1644.75px;top:760px;width:18.0143px;height:11px;background:#fcfdfd;"></div>
<div style="left:1662.5px;top:760px;width:18.0143px;height:11px;background:#fcfdfd;"></div>
<div style="left:1680.25px;top:760px;width:18.0143px;height:11px;background:#fcfdfd;"></div>
<div style="left:1574px;top:771px;width:18.0143px;height:17px;background:#c9cdd0;"></div>
<div style="left:1591.75px;top:771px;width:18.0143px;height:17px;background:#dee0e2;"></div>
<div style="left:1609.5px;top:771px;width:18.0143px;height:17px;background:#b9bfc3;"></div>
<div style="left:1627.25px;top:771px;width:18.0143px;height:17px;background:#959da2;"></div>
<div style="left:1644.75px;top:771px;width:18.0143px;height:17px;background:#f4f5f5;"></div>
<div style="left:1662.5px;top:771px;width:18.0143px;height:17px;background:#c3c8cb;"></div>
<div style="left:1680.25px;top:771px;width:18.0143px;height:17px;background:#dfe0e2;"></div>
<span class="t" id="t93" style="top:771px;font-size:18px;line-height:20px;color:#e2701d;font-weight:700;left:1712px;letter-spacing:-0.048px;transform:translateX(0.13px) scale(0.9550,1.0000);transform-origin:left 16px;">Pending Test</span>
</div>
<div style="left:1884.2px;top:466px;width:6.8px;height:220.5px;background:#567080;border-radius:3.4px;"></div>
</section>
</main>
<!-- quick actions menu -->
<nav class="g quick-actions" role="menu">
<div style="left:644.6px;top:0px;width:147.1px;height:470.8px;background:#fff;border:1.2px solid #c3cfd8;box-shadow:0 1px 4px rgba(40,60,80,.32), -1px 0 1.5px rgba(40,60,80,.22);"></div>
<span class="t" id="t94" style="top:8px;font-size:15px;line-height:17px;color:#5f7f92;-webkit-text-stroke:0.2px #5f7f92;left:658.30px;letter-spacing:0.441px;">Quick Actions</span>
<svg style="left:765px;top:13.5px;" width="15" height="8" viewBox="0 0 15 8" fill="none"><polyline points="0,0 7.5,8 15,0" stroke="#1261b6" stroke-width="1.5" stroke-linecap="butt" stroke-linejoin="miter"/></svg>
<div style="left:646.2px;top:37px;width:143.8px;height:1px;background:#b2c2cd;"></div>
<a class="t" id="t95" role="menuitem" style="top:62px;font-size:15px;line-height:17px;color:#1e62b5;-webkit-text-stroke:0.2px #1e62b5;left:670.80px;letter-spacing:0.218px;">View Details</a>
<a class="t" id="t96" role="menuitem" style="top:102px;font-size:15px;line-height:17px;color:#1e62b5;-webkit-text-stroke:0.2px #1e62b5;left:671.03px;letter-spacing:0.220px;">Edit</a>
<div style="left:646.2px;top:142px;width:143.8px;height:1.1px;background:#2064b4;"></div>
<a class="t" id="t97" role="menuitem" style="top:167px;font-size:15px;line-height:17px;color:#1e62b5;-webkit-text-stroke:0.2px #1e62b5;left:670.77px;letter-spacing:0.315px;">Test Script</a>
<div style="left:653.1px;top:187px;width:124.7px;height:50.9px;background:#fb3b3c;box-shadow:-1px 3px 4px rgba(0,0,0,.38);"></div>
<div style="left:655.8px;top:189.8px;width:119.25px;height:45.2px;background:#dde4e8;box-shadow:inset 0 0 0 1px rgba(236,242,244,.9);"></div>
<div style="left:656.4px;top:190.8px;width:118.2px;height:3.3px;background:#c8c9ca;"></div>
<div style="left:772.6px;top:190.8px;width:2px;height:43.6px;background:linear-gradient(to right, rgba(150,165,175,0), rgba(150,165,175,.6));"></div>
<a class="t" id="t98" role="menuitem" style="top:206px;font-size:15px;line-height:17px;color:#5b7b8c;-webkit-text-stroke:0.2px #5b7b8c;left:670.63px;letter-spacing:-0.120px;">Review</a>
<a class="t" id="t99" role="menuitem" aria-disabled="true" style="top:246px;font-size:15px;line-height:17px;color:#b3c1ca;-webkit-text-stroke:0.2px #b3c1ca;left:670.63px;letter-spacing:0.031px;">Run Now</a>
<a class="t" id="t100" role="menuitem" aria-disabled="true" style="top:285px;font-size:15px;line-height:17px;color:#b3c1ca;-webkit-text-stroke:0.2px #b3c1ca;left:670.53px;letter-spacing:0.188px;">Schedule</a>
<div style="left:646.2px;top:325px;width:143.8px;height:1.1px;background:#2064b4;"></div>
<a class="t" id="t101" role="menuitem" style="top:350px;font-size:15px;line-height:17px;color:#1e62b5;-webkit-text-stroke:0.2px #1e62b5;left:670.90px;letter-spacing:0.177px;">Clone</a>
<a class="t" id="t102" role="menuitem" style="top:390px;font-size:15px;line-height:17px;color:#1e62b5;-webkit-text-stroke:0.2px #1e62b5;left:670.93px;letter-spacing:0.245px;">Export Script</a>
<a class="t" id="t103" role="menuitem" style="top:429px;font-size:15px;line-height:17px;color:#1e62b5;-webkit-text-stroke:0.2px #1e62b5;left:670.93px;letter-spacing:0.270px;">Deprecate</a>
</nav>
<div style="left:0px;top:0px;width:1916px;height:813px;background:transparent;border:2px solid #a6a6a6;pointer-events:none;"></div>
</div>
</body>
</html>
